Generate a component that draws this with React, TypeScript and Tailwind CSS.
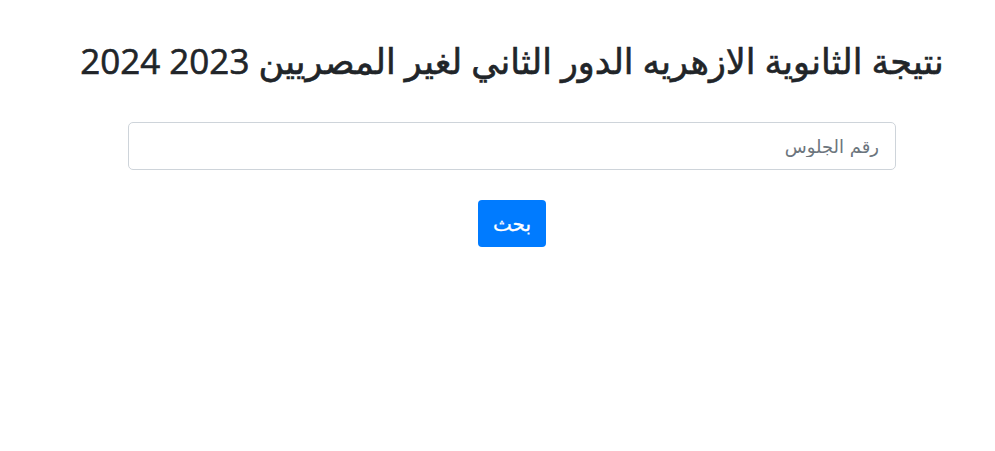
export default function App() {
  return (
    <div dir="rtl" className="w-[995px] h-[451px] bg-white font-['DejaVu_Sans',sans-serif]">
      <div className="flex flex-col items-center pl-[29px] pt-[40px]">
        <h2 className="m-0 font-['Open_Sans','DejaVu_Sans',sans-serif] text-[35px] leading-[42px] font-medium text-[#212529] [-webkit-text-stroke:0.6px_#212529]">
          نتيجة الثانوية الازهريه الدور الثاني لغير المصريين 2023 2024
        </h2>
        <input
          type="text"
          placeholder="رقم الجلوس"
          className="mt-[40px] w-[768px] h-[48px] border border-[#ced4da] rounded-[5px] px-4 text-[18px] text-[#495057] placeholder:text-[#6c757d] outline-none"
        />
        <button className="mt-[30px] w-[68px] h-[47px] bg-[#007bff] text-white text-[20px] rounded-[4px] [-webkit-text-stroke:0.3px_#ffffff]">
          بحث
        </button>
      </div>
    </div>
  );
}
